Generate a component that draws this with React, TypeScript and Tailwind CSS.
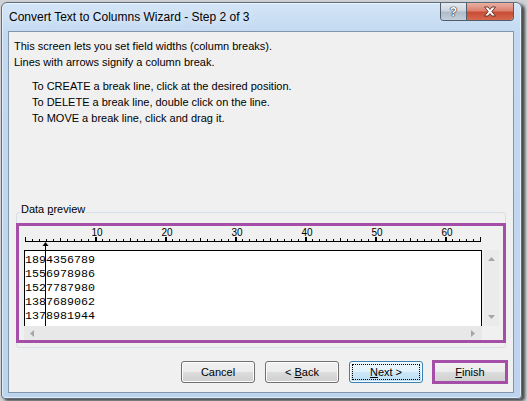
import React from 'react';

const ui = "font-['Segoe_UI','Liberation_Sans',Arial,sans-serif]";
const mono = "font-['Courier_New','Liberation_Mono',monospace]";

const rows = ['1894356789', '1556978986', '1527787980', '1387689062', '1378981944'];

function Ruler() {
  const ticks = [];
  for (let c = 0; c <= 65; c++) {
    const x = 6 + c * 7;
    const major = c % 10 === 0;
    const h = c === 0 || c === 65 ? 4 : major ? 4 : c % 5 === 0 ? 3 : 2;
    ticks.push(<rect key={c} x={x} y={15 - h} width={major && c > 0 ? 2 : 1} height={h} fill="#000" />);
  }
  return (
    <svg width="484" height="24" className="block">
      <rect x="6" y="15" width="456" height="1" fill="#000" />
      {ticks}
      {[10, 20, 30, 40, 50, 60].map((n) => (
        <text key={n} x={6 + n * 7 + 2} y="10" textAnchor="middle" fontSize="10" fontFamily="Liberation Sans, Arial, sans-serif" fill="#000">
          {n}
        </text>
      ))}
    </svg>
  );
}

function Tri({ dir }: { dir: 'up' | 'down' | 'left' | 'right' }) {
  const pts = {
    up: '0,4 7,4 3.5,0',
    down: '0,0 7,0 3.5,4',
    left: '4,0 4,7 0,3.5',
    right: '0,0 0,7 4,3.5',
  }[dir];
  const w = dir === 'up' || dir === 'down' ? 7 : 4;
  const h = dir === 'up' || dir === 'down' ? 4 : 7;
  return (
    <svg width={w} height={h} className="block">
      <polygon points={pts} fill="#a6a6a6" />
    </svg>
  );
}

function Btn({ children, focused }: { children: React.ReactNode; focused?: boolean }) {
  return (
    <button
      className={`flex h-[22px] w-[74px] items-center justify-center rounded-[3px] border p-[2px] text-[11px] text-black ${
        focused
          ? 'border-[#3c7fb1] bg-[linear-gradient(#eef7fd_0%,#e0f1fb_50%,#cbe8f9_50%,#bcdff4_100%)] shadow-[inset_0_0_0_1px_#f5fbff]'
          : 'border-[#707070] bg-[linear-gradient(#f2f2f2_0%,#ebebeb_50%,#dddddd_50%,#cfcfcf_100%)] shadow-[inset_0_0_0_1px_#fcfcfc]'
      }`}
    >
      <span className={`block h-full w-full text-center leading-[14px] ${focused ? 'border border-dotted border-black' : 'border border-transparent'}`}>
        {children}
      </span>
    </button>
  );
}

export default function App() {
  return (
    <div className={`h-[401px] w-[527px] overflow-hidden bg-[#cfd1d4] pl-[1px] pt-[2px] ${ui}`}>
      <div className="flex h-[397px] w-[521px] flex-col rounded-t-[6px] rounded-b-[4px] border border-[#5e6d7e] bg-[linear-gradient(180deg,#d3e5f7_0%,#c2d9f0_8%,#bcd4ed_100%)] shadow-[3px_2px_3px_rgba(0,0,0,0.65),inset_0_0_0_1px_rgba(255,255,255,0.55)]">
        {/* title bar */}
        <div className="flex h-[28px] shrink-0 items-start justify-between pl-[7px] pr-[7px]">
          <span className="pt-[6px] text-[12px] leading-[16px] text-black [text-shadow:0_0_8px_rgba(255,255,255,0.95)]">
            Convert Text to Columns Wizard - Step 2 of 3
          </span>
          <div className="flex h-[18px] overflow-hidden rounded-b-[4px] border border-t-0 border-[#4f5d6d]">
            <div className="flex w-[26px] items-center justify-center border-r border-[#4f5d6d] bg-[linear-gradient(#e4eaf0_0%,#cdd6e0_45%,#aebbc9_55%,#c3ceda_100%)]">
              <span className="text-[12px] font-bold leading-none text-white [text-shadow:0_0_1px_#222,0_0_1px_#222,0_0_1px_#222]">?</span>
            </div>
            <div className="flex w-[46px] items-center justify-center bg-[linear-gradient(#eab0a2_0%,#dc8270_45%,#c84c36_55%,#d5694f_100%)]">
              <svg width="14" height="11" viewBox="0 0 14 11">
                <path d="M1.5 1 L5 1 L7 3.4 L9 1 L12.5 1 L8.8 5.5 L12.5 10 L9 10 L7 7.6 L5 10 L1.5 10 L5.2 5.5 Z" fill="#fff" stroke="#5a2a22" strokeWidth="0.9" />
              </svg>
            </div>
          </div>
        </div>

        {/* client area */}
        <div className="ml-[6px] h-[362px] w-[506px] border border-[#8296ab] bg-[#f0f0f0]">
          <div className="pl-[5px] pt-[6px] text-[11px] leading-[16px] text-black">
            <p>This screen lets you set field widths (column breaks).</p>
            <p>Lines with arrows signify a column break.</p>
            <div className="mt-[8px] pl-[18px]">
              <p>To CREATE a break line, click at the desired position.</p>
              <p>To DELETE a break line, double click on the line.</p>
              <p>To MOVE a break line, click and drag it.</p>
            </div>
          </div>

          {/* Data preview group */}
          <div className="relative ml-[7px] mt-[86px] h-[136px] w-[490px] rounded-[3px] border border-[#d5dfe5]">
            <span className="absolute left-[3px] top-[-10px] bg-[#f0f0f0] px-[1px] text-[11px] leading-[13px] text-black">
              Data <u>p</u>review
            </span>
            <div className="relative -mx-px mt-[10px] h-[120px] border-[3px] border-[#a54ea8]">
              <Ruler />
              <div className="flex h-[76px] pl-[5px]">
                <div className={`h-full w-[458px] border-l border-r border-t border-black bg-white pt-[2px] text-[11.67px] leading-[14px] text-black ${mono}`}>
                  {rows.map((r) => (
                    <div key={r}>{r}</div>
                  ))}
                </div>
                <div className="ml-[2px] flex h-full w-[15px] flex-col items-center justify-between bg-[#ebebeb] py-[7px]">
                  <Tri dir="up" />
                  <Tri dir="down" />
                </div>
              </div>
              <div className="flex h-[14px] pl-[5px]">
                <div className="flex w-[458px] items-center justify-between bg-[#e8e8e8] pl-[6px] pr-[7px]">
                  <Tri dir="left" />
                  <Tri dir="right" />
                </div>
              </div>
              {/* column break line */}
              <svg width="7" height="84" className="absolute left-[23px] top-[16px]">
                <polygon points="3.5,0 6.5,4 0.5,4" fill="#000" />
                <rect x="3" y="3" width="1" height="81" fill="#000" />
              </svg>
            </div>
          </div>

          {/* buttons */}
          <div className="mt-[13px] flex justify-end gap-[10px] pr-[6px]">
            <Btn>Cancel</Btn>
            <Btn>
              &lt; <u>B</u>ack
            </Btn>
            <Btn focused>
              <u>N</u>ext &gt;
            </Btn>
            <div className="relative">
              <Btn>
                <u>F</u>inish
              </Btn>
              <span className="pointer-events-none absolute -inset-px border-[3px] border-[#a54ea8]" />
            </div>
          </div>
        </div>
      </div>
    </div>
  );
}
